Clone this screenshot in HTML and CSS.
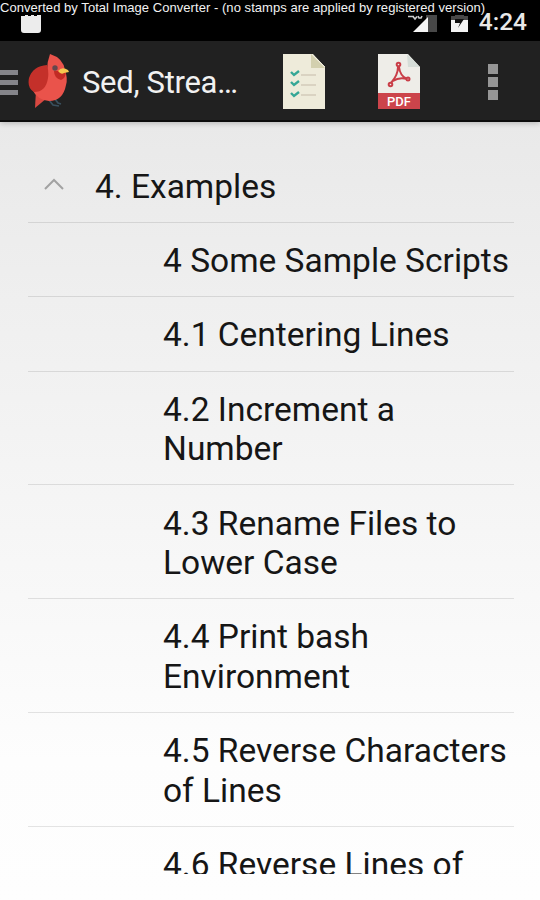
FILE: index.html
```html
<!DOCTYPE html>
<html lang="en">
<head>
    <meta charset="UTF-8">
    <meta name="viewport" content="width=device-width, initial-scale=1.0">
    <title>Sed, Stream Editor</title>
    <link rel="stylesheet" href="styles.css">
</head>
<body>
    <div class="statusbar">
        <svg class="sd" width="22" height="20" viewBox="0 0 22 20">
            <path d="M1 2H5V1H8V2H11V1H14V2H17V1H21V16Q21 19 18 19H4Q1 19 1 16Z" fill="#ececec"/>
        </svg>
        <svg class="signal" width="36" height="20" viewBox="0 0 36 20">
            <path d="M18 0H29V17H18Z" fill="#484848"/>
            <path d="M5 17L20 2V17Z" fill="#f4f4f4"/>
            <path d="M0 1.5H6M5 1.5L7 4L9 1.5M10 1L11 3H13L14 1" fill="none" stroke="#ccc" stroke-width="1.6"/>
        </svg>
        <svg class="battery" width="18" height="18" viewBox="0 0 18 18">
            <path d="M0 1H4V0H13V1H17V6H0Z" fill="#484848"/>
            <path d="M0 5H17V17H0Z" fill="#f4f4f4"/>
            <path d="M4 4H13L7 13L9 8H4Z" fill="#111"/>
        </svg>
        <span class="clock">4:24</span>
        <div class="banner">Converted by Total Image Converter - (no stamps are applied by registered version)</div>
    </div>

    <div class="toolbar">
        <div class="menu"><i></i><i></i><i></i></div>
        <svg class="bird" width="42" height="56" viewBox="0 0 42 56">
            <path d="M21 46L25 51L31 52M27 45L30 49L33 50" fill="none" stroke="#39505e" stroke-width="1.7"/>
            <path d="M8 36L7 54L19 44Z" fill="#d94841"/>
            <path d="M22 0Q35 4 37 16Q40 25 38 31Q35 47 21 47Q9 46 4 35L19 16Q19 8 22 0Z" fill="#ea534b"/>
            <path d="M19 11Q5 12 1 24Q-1 34 6 38Q18 38 20 24Q21 18 19 11Z" fill="#c4302a"/>
            <path d="M26 17Q26 24 33 26Q38 24 38 17Z" fill="#c22b25"/>
            <circle cx="27" cy="14" r="2.7" fill="#65474d"/>
            <path d="M30 17Q34 12 40 16L41 18L36 19Q33 21 30 17Z" fill="#f5c84f"/>
        </svg>
        <h1 class="title">Sed, Strea…</h1>
        <svg class="doc checklist" width="44" height="56" viewBox="0 0 44 56">
            <path d="M1 0H31L43 13V55H1Z" fill="#eeebda"/>
            <path d="M29 0L43 14H29Z" fill="#d3d0af"/>
            <path d="M30 0L43 13" stroke="#eeebda"/>
            <path d="M19 21H34M19 31H34M19 41H34" stroke="#d3cbbb" stroke-width="1.5"/>
            <path d="M9 18L12 21L17 17M9 28L12 31L17 27M9 39L12 42L17 38" fill="none" stroke="#36a796" stroke-width="2.4"/>
        </svg>
        <svg class="doc pdf" width="44" height="56" viewBox="0 0 44 56">
            <path d="M1 0H31L43 13V55H1Z" fill="#eeede8"/>
            <path d="M30 0L43 13H31Z" fill="#d6ddd8"/>
            <path d="M1 39H43V55H1Z" fill="#cc444b"/>
            <g fill="none" stroke="#c93e48" stroke-width="2">
                <path d="M21 13Q21 21 14 29M22 13Q23 22 30 25M16 27Q22 23 30 25"/>
                <circle cx="21.5" cy="10.5" r="1.8"/>
                <circle cx="13.5" cy="30.5" r="1.8"/>
                <circle cx="31" cy="25" r="1.5"/>
            </g>
            <text class="pdf-label" x="22" y="52" text-anchor="middle">PDF</text>
        </svg>
        <div class="overflow"><i></i><i></i><i></i></div>
    </div>

    <div class="list">
        <div class="row group">
            <svg class="chevron" width="20" height="12" viewBox="0 0 20 12">
                <path d="M1 11L10 2L19 11" fill="none" stroke="#a2a2a2" stroke-width="2"/>
            </svg>
            <span>4. Examples</span>
        </div>
        <div class="row">4 Some Sample Scripts</div>
        <div class="row">4.1 Centering Lines</div>
        <div class="row">4.2 Increment a<br>Number</div>
        <div class="row">4.3 Rename Files to<br>Lower Case</div>
        <div class="row">4.4 Print bash<br>Environment</div>
        <div class="row">4.5 Reverse Characters<br>of Lines</div>
        <div class="row">4.6 Reverse Lines of</div>
    </div>
</body>
</html>
```
FILE: styles.css
```css
* {
    margin: 0;
    padding: 0;
    box-sizing: border-box;
}

body {
    height: 900px;
    overflow: hidden;
    background: linear-gradient(180deg, #e9e9e9 122px, #efefef 300px, #fdfdfd 760px, #fefefe 900px);
    font-family: Roboto, sans-serif;
    color: #161616;
}

.statusbar {
    position: relative;
    display: flex;
    align-items: flex-start;
    height: 41px;
    padding: 14px 13px 0 20px;
    background: #000;
}

.signal {
    margin-left: 366px;
    margin-top: 1px;
}

.battery {
    margin-left: 7px;
    margin-top: 1px;
}

.clock {
    margin-left: auto;
    margin-top: -6px;
    font-size: 24.5px;
    font-weight: 500;
    line-height: 28px;
    color: #e8e8e8;
}

.banner {
    position: absolute;
    top: 0;
    left: 0;
    height: 15px;
    font-family: "Liberation Sans", sans-serif;
    font-size: 13px;
    line-height: 16px;
    letter-spacing: 0.05px;
    white-space: nowrap;
    color: #f2f2f2;
}

.toolbar {
    display: flex;
    align-items: flex-start;
    height: 81px;
    padding-top: 13px;
    background: #212121;
    border-bottom: 2px solid #0b0b0b;
    box-shadow: 0 1px 6px rgba(0, 0, 0, 0.25);
}

.menu {
    display: grid;
    gap: 5px;
    width: 18px;
    margin-top: 16px;
}

.menu i {
    height: 5px;
    background: #85858a;
}

.bird {
    margin-left: 10px;
}

.title {
    width: 170px;
    margin-left: 12px;
    margin-top: 9px;
    font-size: 31px;
    font-weight: 400;
    line-height: 40px;
    letter-spacing: -0.3px;
    white-space: nowrap;
    color: #f1f1f1;
}

.checklist {
    margin-left: 30px;
}

.pdf {
    margin-left: 51px;
}

.pdf-label {
    font-size: 13px;
    font-weight: 500;
    fill: #fff;
}

.overflow {
    display: grid;
    gap: 3px;
    margin-left: 67px;
    margin-top: 10px;
}

.overflow i {
    width: 10px;
    height: 10px;
    background: #969696;
}

/* the last row runs off the bottom of the list */
.list {
    height: 752px;
    padding: 26.7px 26px 0 28px;
    overflow: hidden;
    font-size: 33.5px;
    line-height: 39.5px;
}

.row {
    padding: 18.2px 0 15.6px 135px;
    border-bottom: 1px solid rgba(0, 0, 0, 0.1);
    white-space: nowrap;
}

.group {
    display: flex;
    align-items: center;
    padding-left: 16px;
}

.chevron {
    margin-right: 31px;
    margin-top: -5px;
}
```
